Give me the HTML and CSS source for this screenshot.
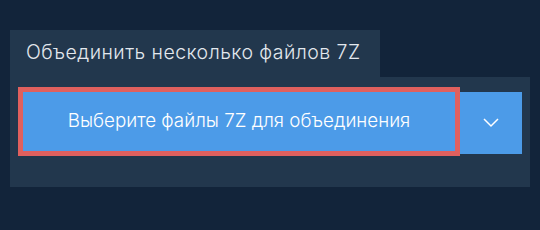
FILE: index.html
```html
<!DOCTYPE html>
<html lang="ru">
  <head>
    <meta charset="UTF-8">
    <title>Объединить 7Z</title>
    <link rel="stylesheet" href="styles.css">
</head>
<body>

<div class="merger">
  <div class="tab">Объединить несколько файлов 7Z</div>
  <div class="panel">
    <div class="buttons">
      <button class="pick-btn">Выберите файлы 7Z для объединения</button>
      <button class="drop-btn">
        <svg width="16" height="10" viewBox="0 0 16 10">
          <polyline points="1,1 8,8 15,1" fill="none" stroke="#fff" stroke-width="1.5"/>
        </svg>
      </button>
    </div>
  </div>
</div>

</body>
</html>
```

FILE: styles.css
```css
* {
  box-sizing: border-box;
}

body {
  margin: 0;
  background-color: #12243a;
  font-family: Inter, "Noto Sans", sans-serif;
  font-weight: 300;
  height: 230px;
}

.merger {
  padding: 30px 10px 0 10px;
}

.tab {
  display: inline-block;
  height: 47px;
  padding: 0 19px 0 16px;
  line-height: 44px;
  background-color: #22374d;
  color: #e3e8ee;
  font-size: 19.5px;
  letter-spacing: 0.45px;
}

.panel {
  background-color: #22374d;
  padding: 10px 8px 31px 8px;
}

.buttons {
  display: flex;
  align-items: flex-start;
}

button {
  border: none;
  background-color: #4c9be8;
  color: #fff;
  font-family: inherit;
  font-weight: 300;
  cursor: pointer;
}

.pick-btn {
  width: 442px;
  height: 69px;
  border: 5px solid #e0605e;
  font-size: 18.8px;
  padding: 0 0 3px 0;
}

.drop-btn {
  width: 62px;
  height: 62px;
  margin-top: 5px;
  display: flex;
  justify-content: center;
  align-items: center;
  padding: 0;
}
```
